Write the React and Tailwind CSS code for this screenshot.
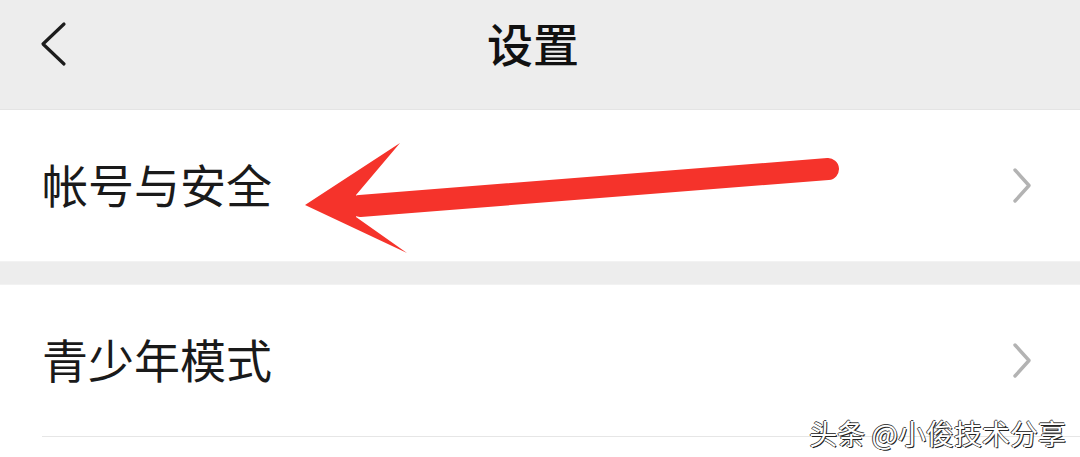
import React from 'react';

const font = { fontFamily: '"Noto Sans CJK SC", "Noto Sans", sans-serif' };

const RowChevron = () => (
  <svg width="20" height="35" viewBox="0 0 20 35" fill="none">
    <polyline points="3,2 17,17.5 3,33" stroke="#b3b3b3" strokeWidth="3.4" strokeLinecap="round" strokeLinejoin="round" />
  </svg>
);

const Row = ({ label }) => (
  <div className="flex items-center justify-between h-[151px] pl-[42px] pr-[48px] bg-white">
    <span className="text-[46px] leading-none text-[#1a1a1a] -mt-[6px]">{label}</span>
    <RowChevron />
  </div>
);

export default function App() {
  return (
    <div className="relative w-full h-[457px] overflow-hidden bg-[#ededed]" style={font}>
      {/* header */}
      <div className="grid grid-cols-[1fr_auto_1fr] items-center h-[110px] pb-[22px] border-b border-[#e4e4e4]">
        <div className="pl-[40px] flex items-center">
          <svg width="28" height="46" viewBox="0 0 28 46" fill="none">
            <polyline points="24,3 3,23 24,43" stroke="#1c1c1c" strokeWidth="3.2" strokeLinecap="round" strokeLinejoin="round" />
          </svg>
        </div>
        <h1 className="text-[46px] leading-none font-medium text-[#111] pr-[14px] -mt-[4px]">设置</h1>
        <div />
      </div>

      <Row label="帐号与安全" />
      <div className="h-[24px] border-y border-[#f2f2f2]" />
      <Row label="青少年模式" />
      <div className="bg-white">
        <div className="ml-[42px] h-px bg-[#e6e6e6]" />
        <div className="h-[30px]" />
      </div>

      {/* red annotation arrow */}
      <svg className="absolute inset-0 pointer-events-none" width="1080" height="457" viewBox="0 0 1080 457">
        <line x1="360" y1="206" x2="828" y2="169" stroke="#f5332b" strokeWidth="22" strokeLinecap="round" />
        <polygon points="305,205 400,143 356,195 356,217 407,253" fill="#f5332b" />
      </svg>

      {/* watermark */}
      <div className="absolute right-[14px] bottom-[10px] text-[28px] leading-none text-white [text-shadow:1px_1px_0_#222,-1px_0_0_#444,0_-1px_0_#444]">
        头条 @小俊技术分享
      </div>
    </div>
  );
}
